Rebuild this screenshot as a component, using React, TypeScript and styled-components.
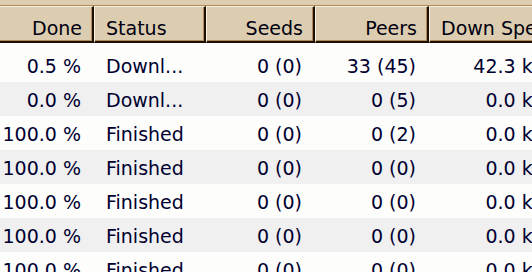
import { FC } from "react";
import styled, { createGlobalStyle } from "styled-components";

const COLORS = {
  tan: "#ddcdb0",
  brown: "#b08a58",
  dark: "#1e0f05",
  light: "#f6f0e2",
  rowAlt: "#f0f0f0",
  row: "#fdfdfc",
  text: "#000030",
};

type T_Align = "left" | "right";

type T_Column = {
  title: string;
  width: number;
  headAlign: T_Align;
  cellAlign: T_Align;
};

const COLUMNS: T_Column[] = [
  { title: "Done", width: 111, headAlign: "right", cellAlign: "right" },
  { title: "Status", width: 112, headAlign: "left", cellAlign: "left" },
  { title: "Seeds", width: 109, headAlign: "right", cellAlign: "right" },
  { title: "Peers", width: 114, headAlign: "right", cellAlign: "right" },
  { title: "Down Speed", width: 146, headAlign: "left", cellAlign: "right" },
];

const ROWS: string[][] = [
  ["0.5 %", "Downl...", "0 (0)", "33 (45)", "42.3 kB/s"],
  ["0.0 %", "Downl...", "0 (0)", "0 (5)", "0.0 kB/s"],
  ["100.0 %", "Finished", "0 (0)", "0 (2)", "0.0 kB/s"],
  ["100.0 %", "Finished", "0 (0)", "0 (0)", "0.0 kB/s"],
  ["100.0 %", "Finished", "0 (0)", "0 (0)", "0.0 kB/s"],
  ["100.0 %", "Finished", "0 (0)", "0 (0)", "0.0 kB/s"],
  ["100.0 %", "Finished", "0 (0)", "0 (0)", "0.0 kB/s"],
];

const GRID = COLUMNS.map((c) => `${c.width}px`).join(" ");

const App: FC = () => {
  return (
    <>
      <GlobalStyle />
      <Window>
        <TopBand />
        <Table>
          <HeaderRow>
            {COLUMNS.map((col) => (
              <HeaderCell key={col.title} $align={col.headAlign}>
                {col.title}
              </HeaderCell>
            ))}
          </HeaderRow>
          <Body>
            {ROWS.map((row, i) => (
              <Row key={i} $alt={i % 2 === 1}>
                {row.map((value, j) => (
                  <Cell key={j} $align={COLUMNS[j].cellAlign}>
                    {value}
                  </Cell>
                ))}
              </Row>
            ))}
          </Body>
        </Table>
      </Window>
    </>
  );
};

export default App;

const GlobalStyle = createGlobalStyle`
  html, body {
    margin: 0;
    padding: 0;
    background: ${COLORS.row};
    overflow: hidden;
  }
`;

const Window = styled.div`
  width: 532px;
  height: 272px;
  overflow: hidden;
  font-family: "DejaVu Sans", Verdana, sans-serif;
  font-size: 19px;
  color: ${COLORS.text};
`;

const TopBand = styled.div`
  height: 6px;
  box-sizing: border-box;
  background: ${COLORS.tan};
  border-bottom: 1px solid ${COLORS.brown};
`;

const Table = styled.div`
  margin-left: -17px;
  width: max-content;
`;

const HeaderRow = styled.div`
  display: grid;
  grid-template-columns: ${GRID};
  background: ${COLORS.tan};
`;

const HeaderCell = styled.div<{ $align: T_Align }>`
  box-sizing: border-box;
  height: 37px;
  padding: 10px 10px 0 11px;
  line-height: 23px;
  white-space: nowrap;
  overflow: hidden;
  text-align: ${({ $align }) => $align};
  color: #000010;
  background: ${COLORS.tan};
  border-top: 1px solid ${COLORS.light};
  border-left: 1px solid ${COLORS.light};
  border-right: 2px solid ${COLORS.dark};
  border-bottom: 2px solid ${COLORS.dark};
  box-shadow: inset -1px -1px 0 ${COLORS.brown};
`;

const Body = styled.div`
  padding-top: 5px;
`;

const Row = styled.div<{ $alt: boolean }>`
  display: grid;
  grid-template-columns: ${GRID};
  height: 34px;
  background: ${({ $alt }) => ($alt ? COLORS.rowAlt : COLORS.row)};
`;

const Cell = styled.div<{ $align: T_Align }>`
  box-sizing: border-box;
  padding: 2px 13px 0 12px;
  line-height: 32px;
  white-space: nowrap;
  text-align: ${({ $align }) => $align};
`;
